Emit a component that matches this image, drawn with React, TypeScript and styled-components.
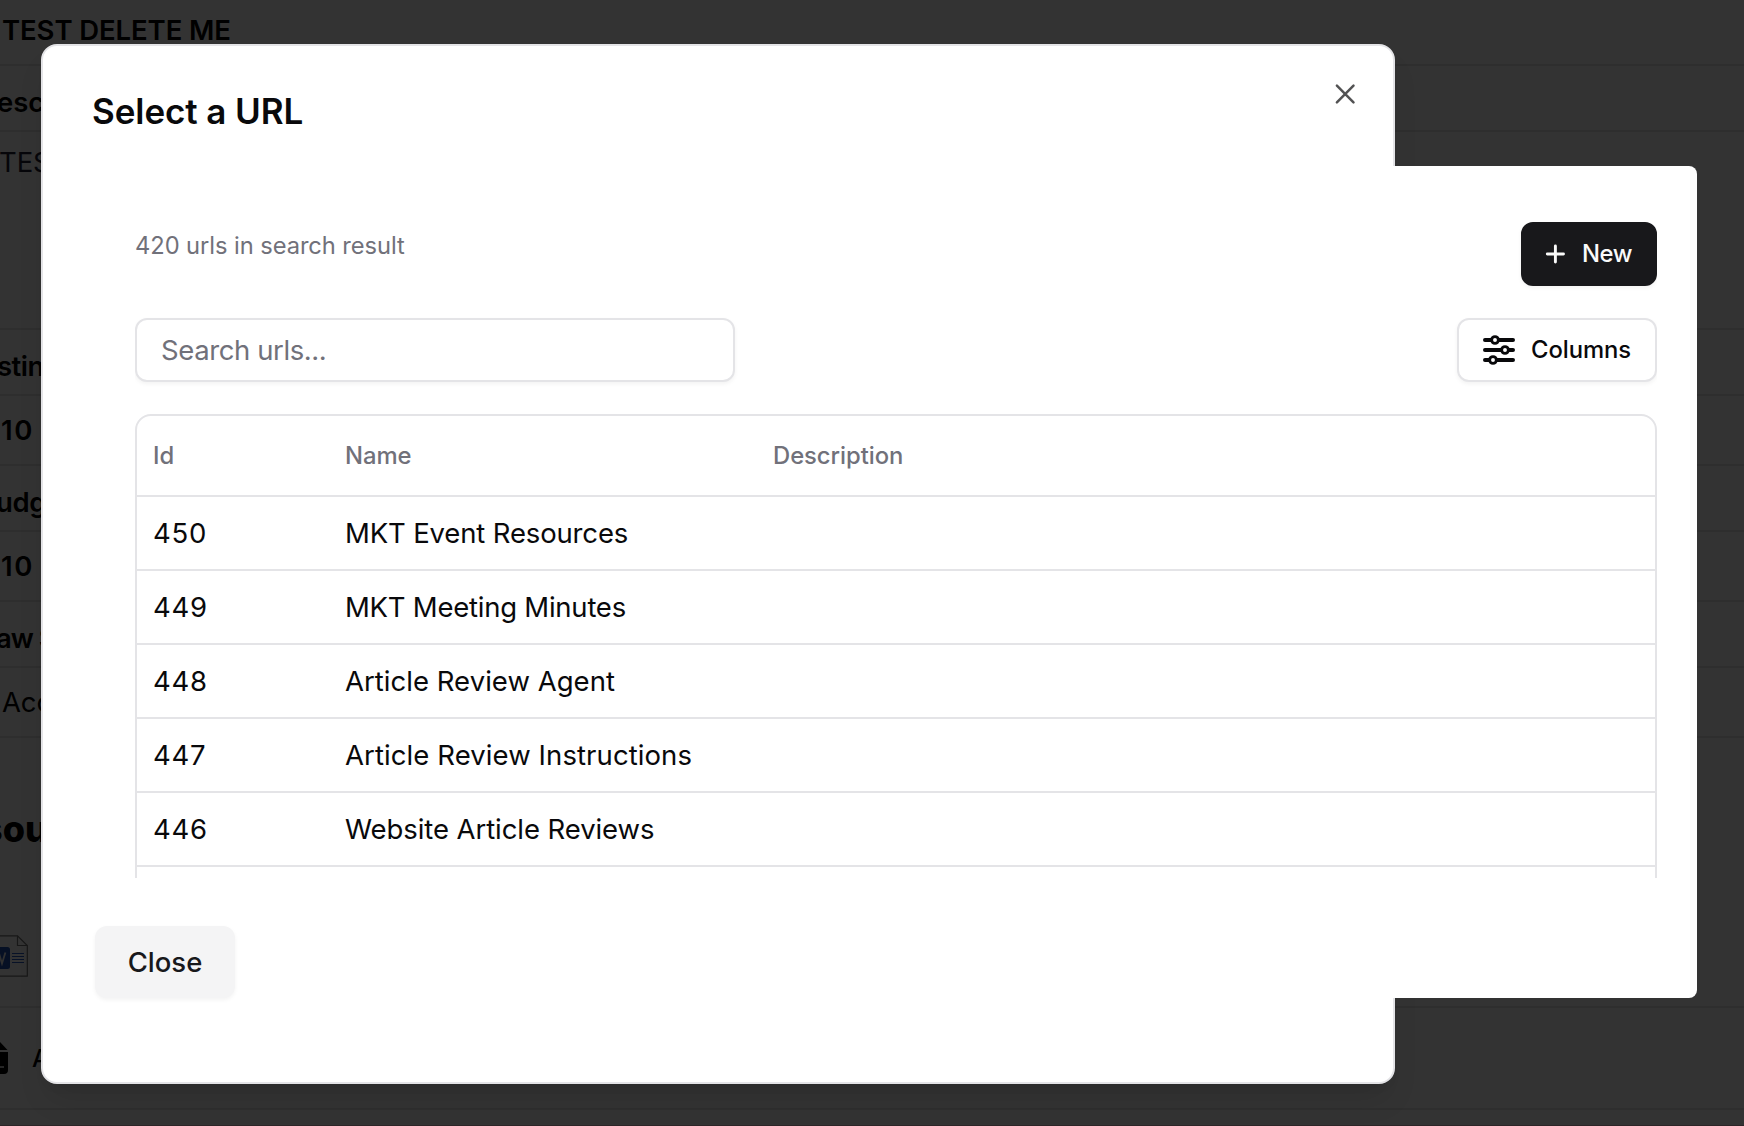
import React from 'react';
import styled, { createGlobalStyle } from 'styled-components';

const GlobalStyle = createGlobalStyle`
  *, *::before, *::after { box-sizing: border-box; }
  body {
    margin: 0;
    overflow: hidden;
    background: #fff;
    color: #09090b;
    font-family: Inter, "Liberation Sans", sans-serif;
    font-size: 27.5px;
    -webkit-font-smoothing: antialiased;
  }
  button, input { font: inherit; color: inherit; margin: 0; }
`;

const Screen = styled.div`
  position: relative;
  width: 1744px;
  height: 1126px;
  overflow: hidden;
`;

const Page = styled.main`
  display: flex;
  flex-direction: column;
  height: 100%;
  color: #000;
`;

const Line = styled.div<{
  $height: number;
  $top: number;
  $indent: number;
  $weight?: number;
  $muted?: boolean;
  $tracking?: number;
}>`
  flex: none;
  height: ${(p) => p.$height}px;
  padding-top: ${(p) => p.$top}px;
  border-bottom: 2px solid #e4e4e7;
  line-height: 40px;
  letter-spacing: ${(p) => p.$tracking ?? -0.1}px;
  white-space: nowrap;
  text-indent: ${(p) => p.$indent}px;
  font-weight: ${(p) => p.$weight ?? 600};
  color: ${(p) => (p.$muted ? '#1e2233' : '#000')};
`;

const Resources = styled.section`
  flex: none;
  height: 270px;
  padding-top: 69px;
  border-bottom: 2px solid #e4e4e7;
  display: flex;
  flex-direction: column;
  gap: 84px;
`;

const SectionTitle = styled.h2`
  margin: 0 0 0 -18px;
  font-size: 36px;
  line-height: 44px;
  font-weight: 800;
`;

const FileRow = styled.div`
  flex: none;
  display: flex;
  align-items: center;
  gap: 24px;
  height: 102px;
  border-bottom: 2px solid #e4e4e7;
  font-size: 24px;
  font-weight: 500;
`;

const Footer = styled.footer`
  flex: 1;
  border-bottom: 1px solid #e0b8c4;
`;

const Backdrop = styled.div`
  position: absolute;
  inset: 0;
  padding: 44px 0 0 41px;
  background: rgba(0, 0, 0, 0.8);
`;

const Dialog = styled.div`
  display: flex;
  flex-direction: column;
  width: 1354px;
  height: 1040px;
  padding: 0 48px;
  border: 2px solid #e4e4e7;
  border-radius: 16px;
  background: #fff;
  box-shadow: 0 20px 30px -6px rgba(0, 0, 0, 0.1), 0 8px 12px -8px rgba(0, 0, 0, 0.1);
`;

const DialogHeader = styled.header`
  flex: none;
  display: flex;
  justify-content: space-between;
  align-items: flex-start;
  height: 120px;
  padding-top: 36px;
`;

const Title = styled.h1`
  margin: 9px 0 0 1px;
  font-size: 35px;
  line-height: 40px;
  font-weight: 600;
  letter-spacing: -0.08px;
`;

const IconButton = styled.button`
  display: flex;
  padding: 0;
  margin-right: -12px;
  border: 0;
  background: none;
  color: #525253;
`;

const Panel = styled.section`
  flex: none;
  width: 1654px;
  height: 832px;
  margin-left: -48px;
  padding: 56px 40px 0 92px;
  border-radius: 8px;
  background: #fff;
`;

const ScrollArea = styled.div`
  display: flex;
  flex-direction: column;
  gap: 32px;
  height: 656px;
  overflow: hidden;
`;

const Toolbar = styled.div`
  flex: none;
  display: flex;
  justify-content: space-between;
  align-items: flex-start;
  height: 64px;
`;

const Count = styled.p`
  margin: 8px 0 0;
  font-size: 23.7px;
  line-height: 32px;
  letter-spacing: -0.06px;
  color: #71717a;
`;

const SearchInput = styled.input`
  width: 600px;
  height: 64px;
  padding: 0 24px 1px;
  border: 2px solid #e4e4e7;
  border-radius: 12px;
  background: #fff;
  box-shadow: 0 2px 4px rgba(0, 0, 0, 0.05);
  letter-spacing: -0.4px;
  outline: none;
  &::placeholder { color: #71717a; opacity: 1; }
`;

const Button = styled.button<{ $tone: 'primary' | 'outline' | 'secondary' }>`
  display: inline-flex;
  align-items: center;
  height: ${(p) => (p.$tone === 'secondary' ? 72 : 64)}px;
  padding: 0 24px;
  border: 2px solid ${(p) => ({ primary: '#18181b', outline: '#e4e4e7', secondary: '#f4f4f5' })[p.$tone]};
  border-radius: 12px;
  background: ${(p) => ({ primary: '#18181b', outline: '#fff', secondary: '#f4f4f5' })[p.$tone]};
  color: ${(p) => ({ primary: '#fafafa', outline: '#09090b', secondary: '#18181b' })[p.$tone]};
  font-size: ${(p) => (p.$tone === 'secondary' ? 27.5 : 23.8)}px;
  font-weight: 500;
  box-shadow: 0 2px 4px rgba(0, 0, 0, 0.05);
`;

const Label = styled.span`
  padding-bottom: 2px;
`;

const NewButton = styled(Button)`
  width: 136px;
  padding: 0 0 0 16px;
  gap: 11px;
  letter-spacing: -0.4px;
`;

const ColumnsButton = styled(Button)`
  width: 200px;
  padding: 0 0 0 23px;
  gap: 15px;
  letter-spacing: -0.05px;
`;

const CloseButton = styled(Button)`
  width: 140px;
  justify-content: center;
  padding: 0;
`;

const Actions = styled.div`
  display: flex;
  margin: 48px 0 0 -40px;
`;

const Table = styled.table`
  flex: none;
  width: 1522px;
  border: 2px solid #e4e4e7;
  border-radius: 16px;
  border-spacing: 0;
  border-collapse: separate;
  table-layout: fixed;
`;

const HeadCell = styled.th<{ $width?: number }>`
  width: ${(p) => (p.$width ? `${p.$width}px` : 'auto')};
  height: 81px;
  padding: 0 16px;
  border-bottom: 2px solid #e4e4e7;
  color: #71717a;
  font-size: 23.8px;
  font-weight: 500;
  letter-spacing: -0.04px;
  text-align: left;
`;

const Cell = styled.td<{ $tracking?: number }>`
  height: 74px;
  padding: 0 16px;
  border-bottom: 2px solid #e4e4e7;
  letter-spacing: ${(p) => p.$tracking ?? 0}px;
`;

const URLS = [
  { id: 450, name: 'MKT Event Resources', tracking: -0.15 },
  { id: 449, name: 'MKT Meeting Minutes', tracking: -0.24 },
  { id: 448, name: 'Article Review Agent', tracking: 0.03 },
  { id: 447, name: 'Article Review Instructions', tracking: 0.09 },
  { id: 446, name: 'Website Article Reviews', tracking: -0.08 },
];

const CloseIcon = () => (
  <svg width="24" height="24" viewBox="0 0 24 24" fill="none" stroke="currentColor" strokeWidth="2.5" strokeLinecap="round">
    <path d="M3.9 3.7 20.5 20.3M20.5 3.7 3.9 20.3" />
  </svg>
);

const PlusIcon = () => (
  <svg width="32" height="32" viewBox="0 0 32 32" fill="none" stroke="currentColor" strokeWidth="2.9" strokeLinecap="round">
    <path d="M16.4 7.9v16.2M8.3 16h16.2" />
  </svg>
);

const SlidersIcon = () => (
  <svg width="34" height="34" viewBox="0 0 34 34" fill="none" stroke="currentColor" strokeWidth="4" strokeLinecap="round">
    <path d="M3 7h28M3 17h28M3 27h28" />
    <g fill="#fff" strokeWidth="2.9">
      <circle cx="13" cy="7" r="3.4" />
      <circle cx="23" cy="17" r="3.4" />
      <circle cx="11" cy="27" r="3.4" />
    </g>
  </svg>
);

const WordIcon = () => (
  <svg width="28" height="42" viewBox="0 0 28 42" fill="none">
    <path d="M0 .8h17.5L27.3 10.5v30.7H0" stroke="#777" strokeWidth="1.2" fill="#fff" />
    <path d="M17.5 .8v9.7h9.8" stroke="#777" strokeWidth="1.2" />
    <rect x="-12" y="12" width="22" height="22" rx="2.5" fill="#1e50b5" />
    <path d="M-7 17.5-4 28.5-.8 19 2 28.5 5.4 17.5" stroke="#eee" strokeWidth="1.8" />
    <path d="M12 18.5h12M12 21.5h12M12 24.5h12M12 27.5h12" stroke="#2c5cc0" strokeWidth="1.2" />
  </svg>
);

const DocumentIcon = () => (
  <svg width="8" height="32" viewBox="0 0 8 32">
    <path d="M0 0 7.5 8H0zM0 10h8v18q0 4-4 4H0z" fill="#000" />
    <path d="M0 25h4" stroke="#fff" strokeWidth="1.5" />
  </svg>
);

export default function App() {
  return (
    <Screen>
      <GlobalStyle />
      <Page>
        <Line $height={66} $top={10} $indent={2}>TEST DELETE ME</Line>
        <Line $height={66} $top={16} $indent={-3}>esc</Line>
        <Line $height={198} $top={10} $indent={-1} $weight={400} $muted>TES</Line>
        <Line $height={66} $top={16} $indent={-3} $tracking={-0.5}>stin</Line>
        <Line $height={70} $top={14} $indent={1} $tracking={1.6}>10</Line>
        <Line $height={66} $top={16} $indent={-4} $tracking={-0.4}>udg</Line>
        <Line $height={70} $top={14} $indent={1} $tracking={1.6}>10</Line>
        <Line $height={66} $top={16} $indent={-4} $tracking={-1}>aw S</Line>
        <Line $height={70} $top={14} $indent={2} $weight={400}>Acc</Line>
        <Resources>
          <SectionTitle>sou</SectionTitle>
          <WordIcon />
        </Resources>
        <FileRow>
          <DocumentIcon />A
        </FileRow>
        <Footer />
      </Page>
      <Backdrop>
        <Dialog role="dialog">
          <DialogHeader>
            <Title>Select a URL</Title>
            <IconButton aria-label="Close">
              <CloseIcon />
            </IconButton>
          </DialogHeader>
          <Panel>
            <ScrollArea>
              <Toolbar>
                <Count>420 urls in search result</Count>
                <NewButton $tone="primary">
                  <PlusIcon />
                  <Label>New</Label>
                </NewButton>
              </Toolbar>
              <Toolbar>
                <SearchInput placeholder="Search urls..." />
                <ColumnsButton $tone="outline">
                  <SlidersIcon />
                  <Label>Columns</Label>
                </ColumnsButton>
              </Toolbar>
              <Table>
                <thead>
                  <tr>
                    <HeadCell $width={192}>Id</HeadCell>
                    <HeadCell $width={428}>Name</HeadCell>
                    <HeadCell>Description</HeadCell>
                  </tr>
                </thead>
                <tbody>
                  {URLS.map((url) => (
                    <tr key={url.id}>
                      <Cell $tracking={0.7}>{url.id}</Cell>
                      <Cell $tracking={url.tracking}>{url.name}</Cell>
                      <Cell />
                    </tr>
                  ))}
                  <tr>
                    <Cell />
                    <Cell />
                    <Cell />
                  </tr>
                </tbody>
              </Table>
            </ScrollArea>
            <Actions>
              <CloseButton $tone="secondary">Close</CloseButton>
            </Actions>
          </Panel>
        </Dialog>
      </Backdrop>
    </Screen>
  );
}
